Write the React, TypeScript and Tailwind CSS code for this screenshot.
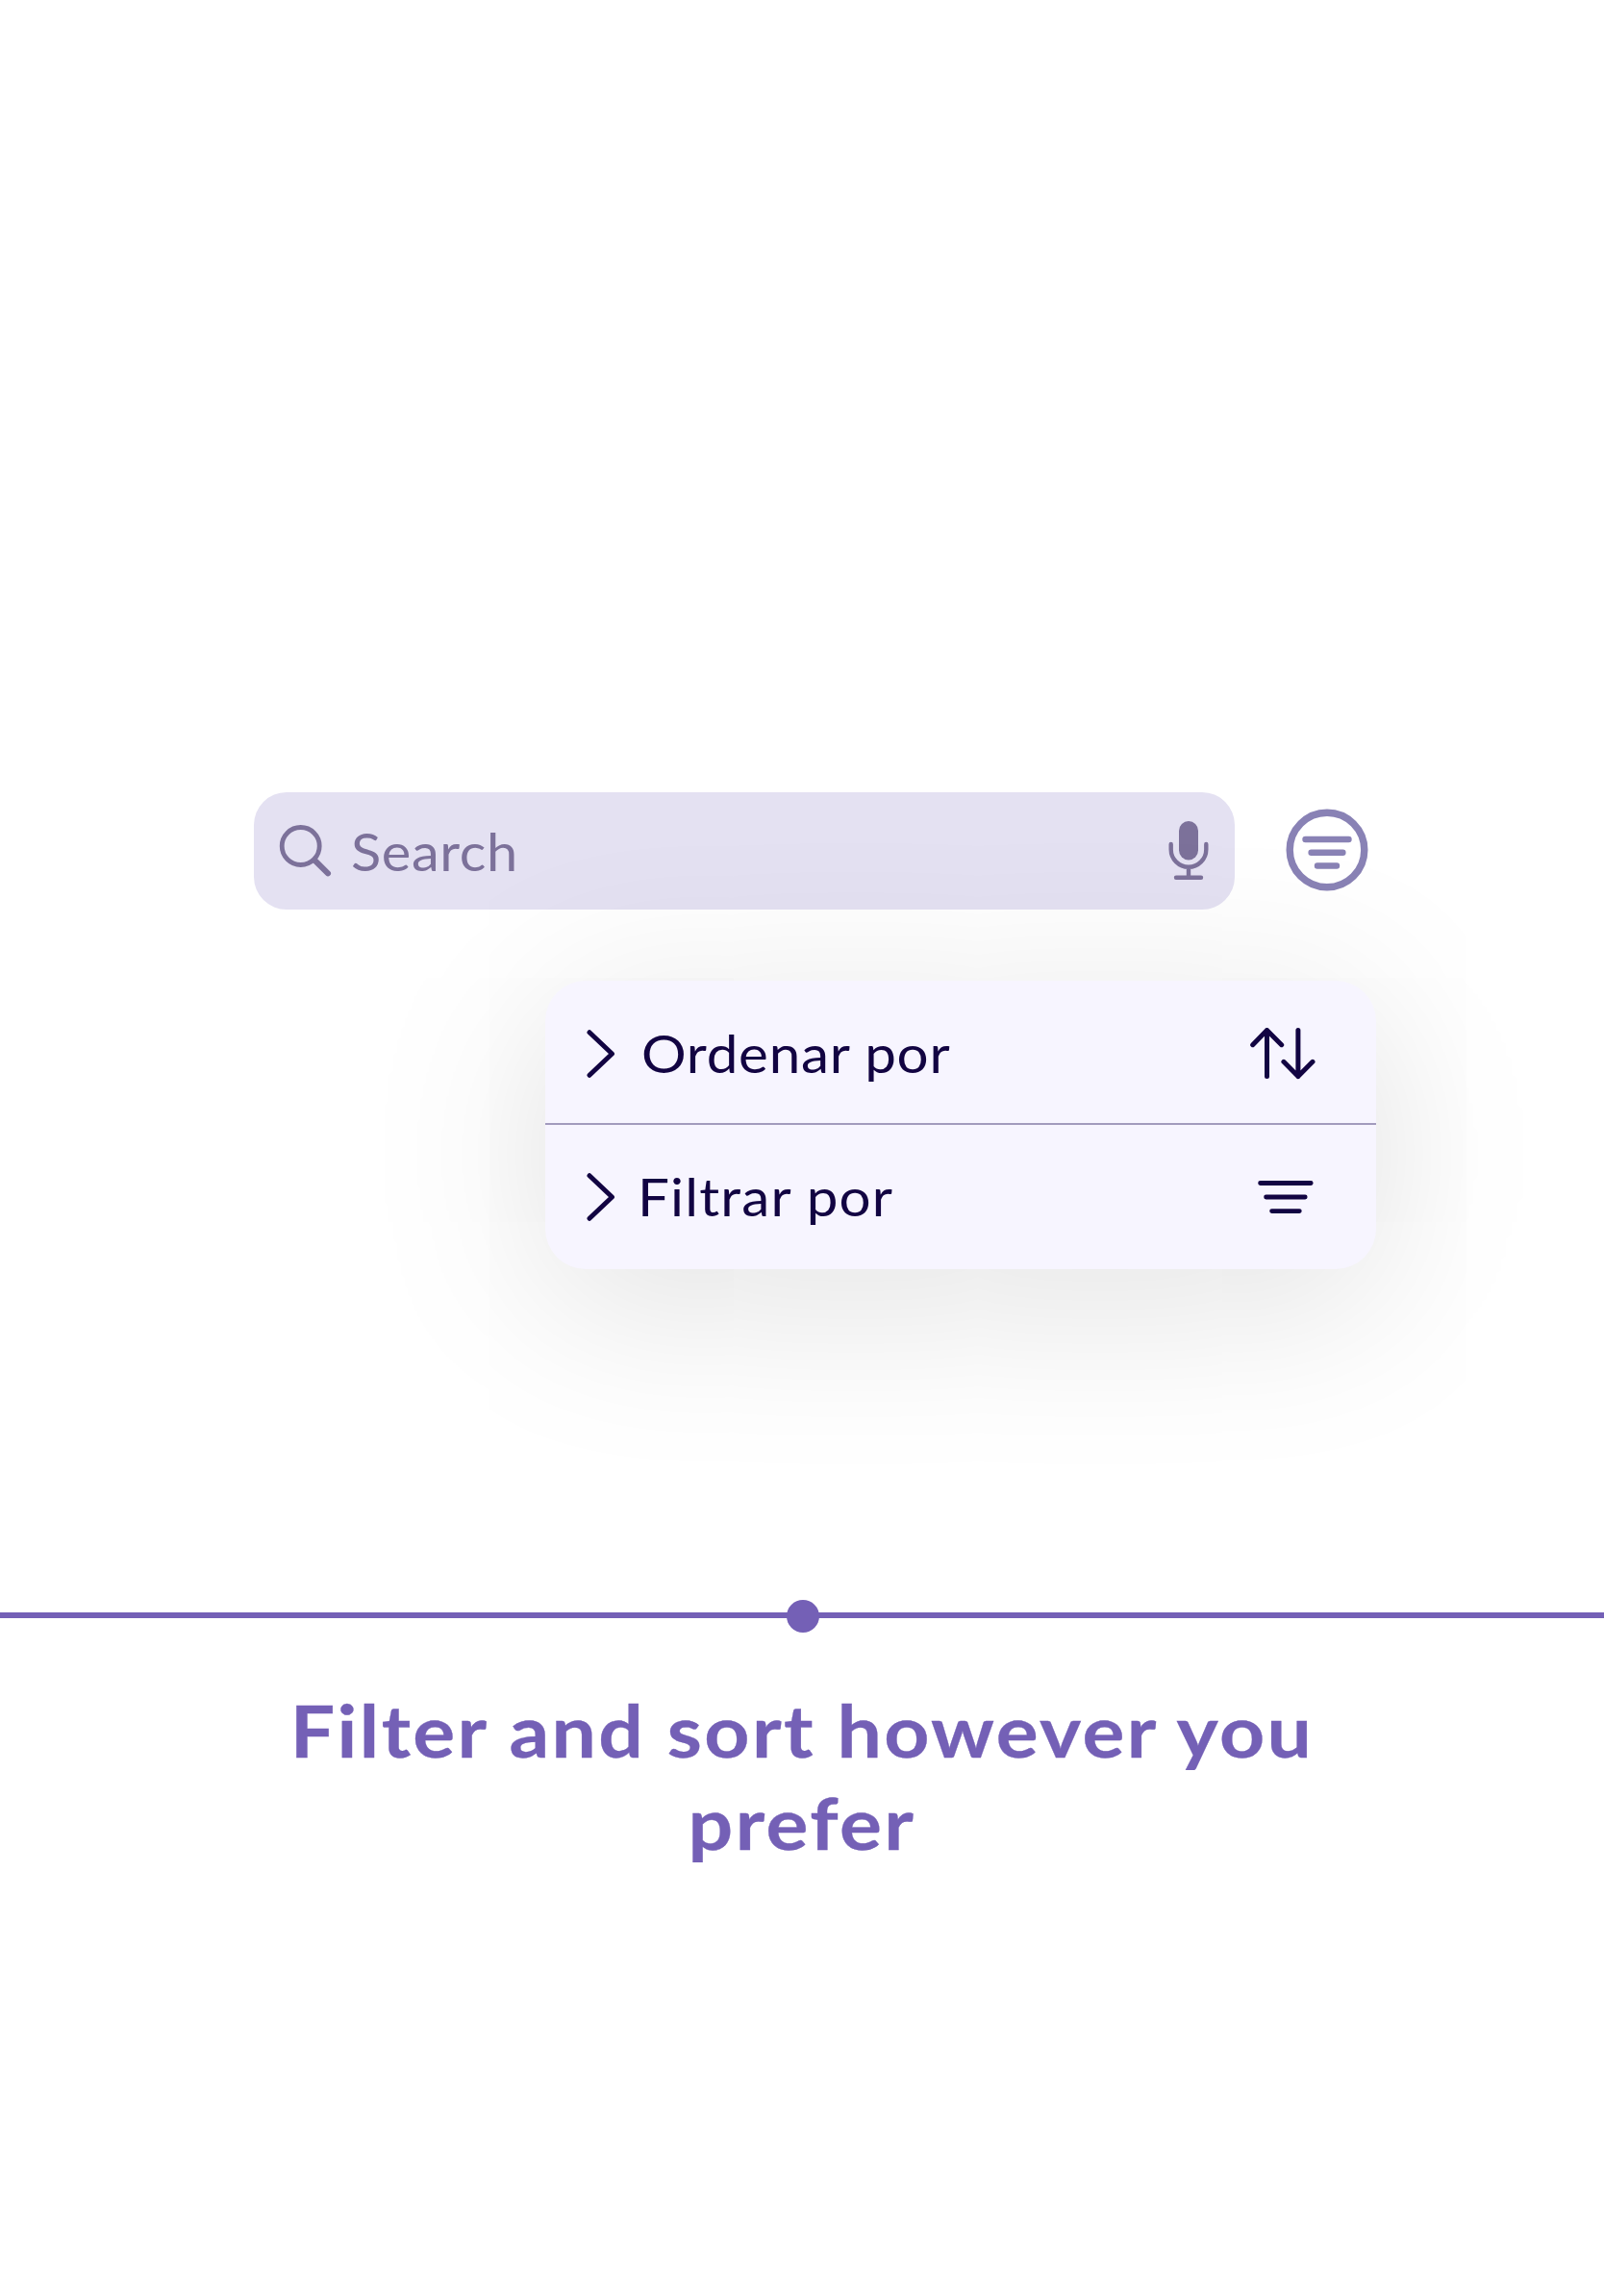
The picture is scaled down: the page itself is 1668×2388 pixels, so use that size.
import React from "react";

function SearchIcon() {
  return (
    <svg width="56" height="56" viewBox="0 0 56 56" fill="none" stroke="#7c719a" strokeLinecap="round">
      <circle cx="22.7" cy="23" r="19.5" strokeWidth="4.8" />
      <path d="M37.5 38L51 51.3" strokeWidth="6" />
    </svg>
  );
}

function MicIcon() {
  return (
    <svg width="42" height="62" viewBox="0 0 42 62" fill="none" stroke="#7c719a" strokeWidth="4.4" strokeLinecap="round">
      <rect x="11" y="0" width="20" height="40.5" rx="10" fill="#7c719a" stroke="none" />
      <path d="M2.7 24V29.4A18.3 18.3 0 0 0 39.3 29.4V24M21 48V58M8 58.8H34" />
    </svg>
  );
}

function FilterCircleIcon() {
  return (
    <svg width="86" height="86" viewBox="0 0 86 86" fill="none" stroke="#8982b5" strokeWidth="6.4" strokeLinecap="round">
      <circle cx="43" cy="43" r="38.8" strokeWidth="7.4" />
      <path d="M20.5 32H65.5M26.6 45.8H59.4M33 59.5H53" />
    </svg>
  );
}

function Chevron() {
  return (
    <svg width="30" height="50" viewBox="0 0 30 50" fill="none" stroke="#120442" strokeWidth="5" strokeLinecap="round" strokeLinejoin="round">
      <path d="M3 2.7L26.5 25L3 47.3" />
    </svg>
  );
}

function SortIcon() {
  return (
    <svg width="68" height="54" viewBox="0 0 68 54" fill="none" stroke="#120442" strokeWidth="5" strokeLinecap="round" strokeLinejoin="round">
      <path d="M17.5 50.5V2.5M2.7 17.7L17.5 2.5L32.7 17.7M49.9 2.5V50.5M34.9 35.3L49.9 50.5L65 35.3" />
    </svg>
  );
}

function FilterIcon() {
  return (
    <svg width="58" height="36" viewBox="0 0 58 36" fill="none" stroke="#120442" strokeWidth="4.8" strokeLinecap="round">
      <path d="M2.6 3.5H55.2M8.6 18H49.2M14.6 32.6H43.3" />
    </svg>
  );
}

export default function App() {
  return (
    <main className="flex h-[2388px] w-[1668px] flex-col overflow-hidden bg-white font-['Lato',sans-serif]">
      <section className="h-[1677px] pt-[824px]">
        <div className="ml-[264px] flex items-center">
          <div className="flex h-[122px] w-[1020px] items-center rounded-[34px] bg-[#e4e1f2] pr-[27px] pl-[26px]">
            <SearchIcon />
            <span className="mt-px ml-[19px] origin-left scale-x-[1.07] text-[54px] leading-[64px] tracking-[0.6px] text-[#7c719a]">
              Search
            </span>
            <span className="ml-auto">
              <MicIcon />
            </span>
          </div>
          <button className="-mt-[3px] ml-[53px]" aria-label="Filter">
            <FilterCircleIcon />
          </button>
        </div>
        <div className="relative mt-[74px] ml-[567px] h-[300px] w-[864px] rounded-[42px] bg-[#f7f5ff] text-[54px] leading-[64px] text-[#120442] shadow-[0_30px_190px_rgba(0,0,0,0.13)]">
          <div className="flex h-[150px] items-center border-b-2 border-[#a29bbd] pt-[3px] pr-[63px] pl-[43px]">
            <Chevron />
            <span className="ml-[27px] origin-left scale-x-[1.08] tracking-[0.7px]">Ordenar por</span>
            <span className="ml-auto">
              <SortIcon />
            </span>
          </div>
          <div className="flex h-[150px] items-center pr-[65px] pl-[43px]">
            <Chevron />
            <span className="ml-[23px] origin-left scale-x-[1.08] tracking-[1.1px]">Filtrar por</span>
            <span className="ml-auto">
              <FilterIcon />
            </span>
          </div>
        </div>
      </section>
      <div className="flex h-[6px] shrink-0 items-center justify-center bg-[#7460b6]">
        <span className="mt-[2px] ml-[2px] size-[34px] shrink-0 rounded-full bg-[#7460b6]" />
      </div>
      <h1 className="mt-[69px] scale-x-[1.11] text-center text-[74px] leading-[96px] font-bold tracking-[2.2px] text-[#7460b6] [-webkit-text-stroke:0.3px_#7460b6]">
        Filter and sort however you
        <br />
        prefer
      </h1>
    </main>
  );
}
